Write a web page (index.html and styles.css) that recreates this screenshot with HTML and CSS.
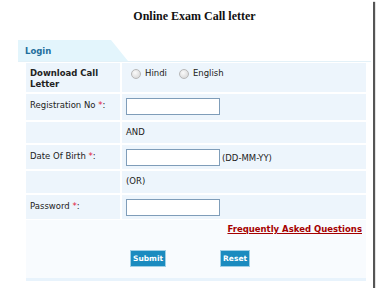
FILE: index.html
```html
<!DOCTYPE html>
<html lang="en">
<head>
    <meta charset="UTF-8">
    <title>Online Exam Call letter</title>
    <link rel="stylesheet" href="styles.css">
</head>
<body>

<div class="frame">
    <h1>Online Exam Call letter</h1>

    <div class="panel">
        <div class="tab-row">
            <div class="tab">Login</div>
        </div>

        <div class="form-body">
            <div class="form-grid">
                <div class="cell label bold row-tall"><div>Download Call Letter</div></div>
                <div class="cell value row-tall">
                    <label class="radio"><span class="dot"></span>Hindi</label>
                    <label class="radio"><span class="dot"></span>English</label>
                </div>

                <div class="cell label row-input"><div>Registration No <span class="req">*</span>:</div></div>
                <div class="cell value row-input"><input type="text" class="field"></div>

                <div class="cell label row-text"></div>
                <div class="cell value row-text"><div class="plain">AND</div></div>

                <div class="cell label row-input2"><div>Date Of Birth <span class="req">*</span>:</div></div>
                <div class="cell value row-input2">
                    <div class="field-line"><input type="text" class="field"><span class="hint">(DD-MM-YY)</span></div>
                </div>

                <div class="cell label row-text2"></div>
                <div class="cell value row-text2"><div class="plain">(OR)</div></div>

                <div class="cell label row-input2"><div>Password <span class="req">*</span>:</div></div>
                <div class="cell value row-input2"><input type="password" class="field"></div>
            </div>

            <div class="footer-area">
                <div class="faq-row"><a href="#" class="faq">Frequently Asked Questions</a></div>
                <div class="button-row">
                    <button class="btn">Submit</button>
                    <button class="btn">Reset</button>
                </div>
            </div>
            <div class="bottom-bar"></div>
        </div>
    </div>
</div>

</body>
</html>
```

FILE: styles.css
```css
body {
    margin: 0;
    background: #fff;
    font-family: "DejaVu Sans", Verdana, sans-serif;
    font-size: 8.5px;
    color: #222;
}
.frame {
    width: 373px;
    height: 288px;
    background: #fff;
    box-shadow: 2px 2px 1px #555;
    overflow: hidden;
}
h1 {
    margin: 0;
    padding: 9px 0 0 16px;
    height: 40px;
    box-sizing: border-box;
    text-align: center;
    font-family: "Liberation Serif", "Times New Roman", serif;
    font-size: 12px;
    line-height: 14px;
    font-weight: bold;
    color: #111;
}
.panel {
    margin-left: 18px;
    width: 353px;
}
.tab-row {
    height: 21px;
    border-bottom: 1px solid #e3f1f8;
}
.tab {
    width: 110px;
    height: 21px;
    box-sizing: border-box;
    padding: 6px 0 0 7px;
    background: #e3f5fc;
    clip-path: polygon(0 0, 93px 0, 110px 21px, 0 21px);
    font-size: 8.5px;
    font-weight: bold;
    color: #1f6f9c;
    line-height: 10px;
}
.form-body {
    margin-left: 8px;
    width: 340px;
    padding-top: 1px;
}
.form-grid {
    display: grid;
    grid-template-columns: 94px 244px;
    column-gap: 2px;
    row-gap: 2px;
}
.cell {
    background: #edf5fc;
    box-sizing: border-box;
    line-height: 10px;
    display: flex;
    align-items: flex-start;
    padding: 5px 0 0 4px;
}
.label.row-input, .label.row-input2 {
    padding-top: 6px;
}
.value.row-input, .value.row-input2 {
    padding-top: 4px;
}
.bold {
    font-weight: bold;
    line-height: 11px;
}
.row-tall { height: 29px; }
.row-input { height: 26px; }
.row-text { height: 21px; }
.row-input2 { height: 24px; }
.row-text2 { height: 22px; }
.req {
    color: #e0203a;
}
.radio {
    display: flex;
    align-items: center;
    margin-right: 7px;
    margin-left: 5px;
    line-height: 11px;
}
.dot {
    width: 8px;
    height: 8px;
    border-radius: 50%;
    border: 1px solid #b8b8b8;
    background: radial-gradient(circle at 40% 35%, #fafafa, #d2d2d2);
    margin-right: 4px;
}
.field-line {
    display: flex;
    align-items: center;
}
.field {
    width: 94px;
    height: 17px;
    box-sizing: border-box;
    border: 1px solid #7f9db9;
    background: #fff;
    margin: 0;
    padding: 0;
}
.hint {
    margin-left: 2px;
}
.footer-area {
    background: #f8fbfe;
    height: 58px;
    margin-top: 1px;
}
.faq-row {
    text-align: right;
    padding: 4px 4px 0 0;
    height: 18px;
    line-height: 10px;
}
.faq {
    color: #a50000;
    font-weight: bold;
    text-decoration: underline;
}
.button-row {
    display: flex;
    gap: 54px;
    padding: 8px 0 0 104px;
}
.btn {
    height: 17px;
    padding: 0 2px;
    background: #1b8bbf;
    border: 1px solid #9fd0e6;
    color: #fff;
    font-family: "DejaVu Sans", Verdana, sans-serif;
    font-size: 7.5px;
    font-weight: bold;
    cursor: pointer;
}
.bottom-bar {
    height: 3px;
    background: #e8f3fc;
}
```
